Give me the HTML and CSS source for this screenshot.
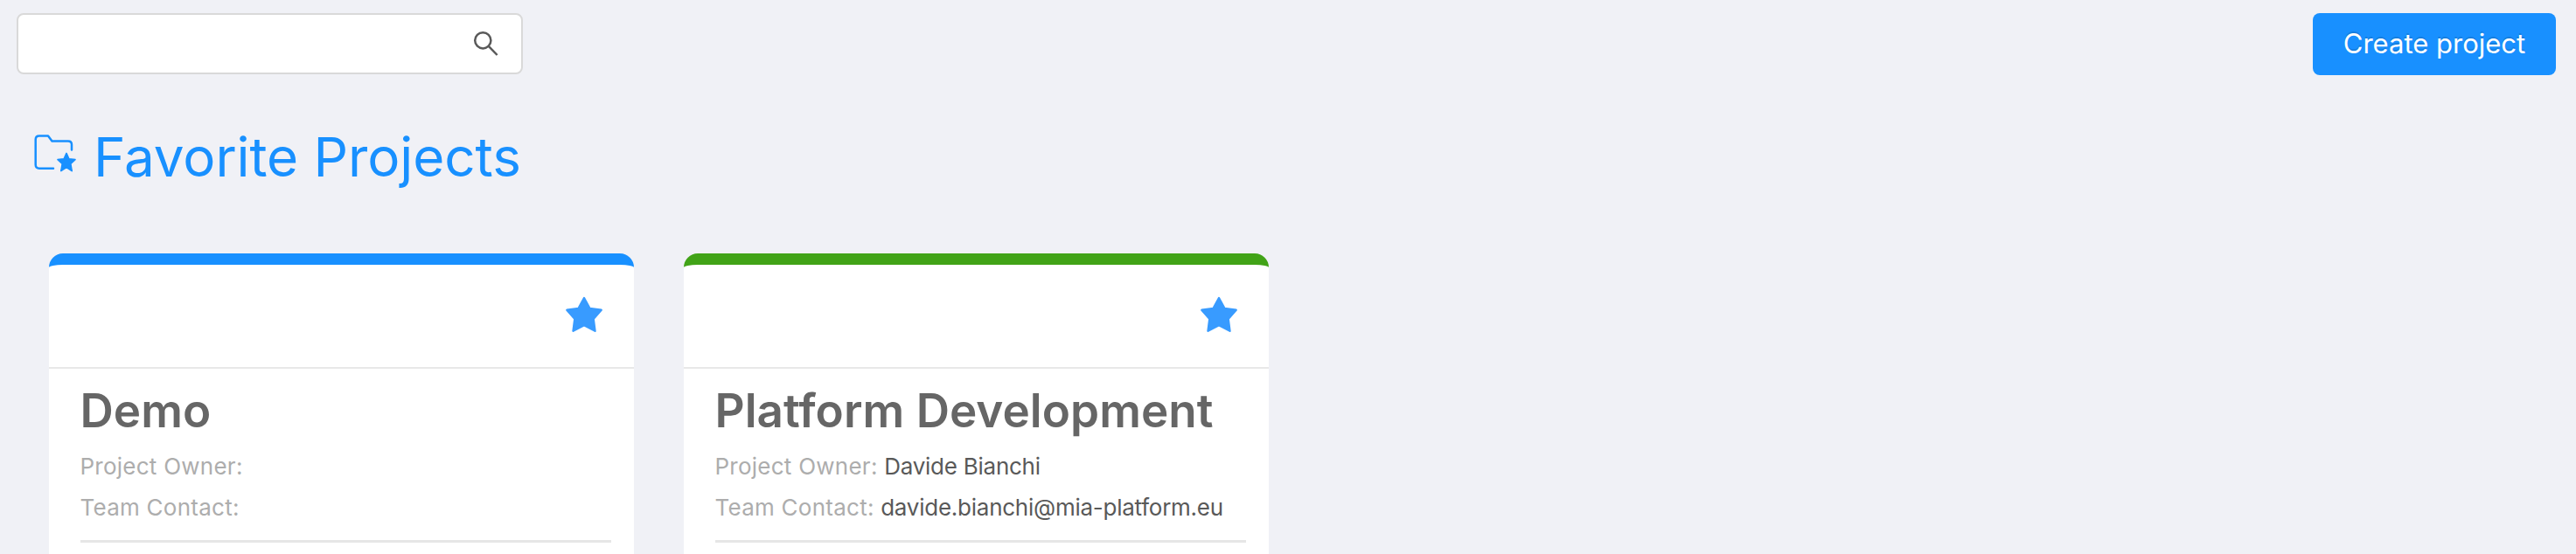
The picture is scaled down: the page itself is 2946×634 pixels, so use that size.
FILE: index.html
```html
<!DOCTYPE html>
<html lang="en">
<head>
<meta charset="utf-8">
<title>Projects</title>
<link rel="stylesheet" href="styles.css">
</head>
<body>
<header class="toolbar">
  <div class="search">
    <input class="search-input" type="text" aria-label="Search">
    <svg class="search-icon" viewBox="0 0 30 30"><circle cx="12.3" cy="11.3" r="9.1"/><path d="M18.8 17.8 28.6 28"/></svg>
  </div>
  <button class="create">Create project</button>
</header>
<main>
  <h1 class="heading">
    <svg class="folder" viewBox="0 0 50 46"><path class="folder-line" d="M22 38.7H5.9Q1.7 38.7 1.7 34.5V5.6Q1.7 1.4 5.9 1.4H16L20.5 7.4H38.9Q43 7.4 43 11.5V17.4"/><path class="folder-star" d="M37 21.4 39.9 27.8 47 28.6 41.8 33.5 43.2 41.6 37 37.6 30.8 41.6 32.2 33.5 27 28.6 34.1 27.8Z"/></svg>
    <span>Favorite Projects</span>
  </h1>
  <section class="cards">
    <article class="card">
      <div class="card-top"><svg class="star" viewBox="0 0 44 42"><path d="M22 2 28.4 13.9 41.7 15.8 32.7 26 34.5 39.8 22 33.2 9.5 39.8 11.3 26 2.3 15.8 15.6 13.9Z"/></svg></div>
      <div class="card-body">
        <h2 class="name">Demo</h2>
        <p class="info">Project Owner:</p>
        <p class="info">Team Contact:</p>
        <hr class="rule">
      </div>
    </article>
    <article class="card green">
      <div class="card-top"><svg class="star" viewBox="0 0 44 42"><path d="M22 2 28.4 13.9 41.7 15.8 32.7 26 34.5 39.8 22 33.2 9.5 39.8 11.3 26 2.3 15.8 15.6 13.9Z"/></svg></div>
      <div class="card-body">
        <h2 class="name">Platform Development</h2>
        <p class="info">Project Owner: <span class="value">Davide Bianchi</span></p>
        <p class="info">Team Contact: <span class="value">davide.bianchi@mia-platform.eu</span></p>
        <hr class="rule">
      </div>
    </article>
  </section>
</main>
</body>
</html>
```
FILE: styles.css
```css
* { box-sizing: border-box; }
html { height: 100%; }
body { margin: 0; height: 100%; overflow: hidden; background: #f0f1f6; font-family: Inter, "Liberation Sans", sans-serif; font-variant-ligatures: none; }
.toolbar { display: flex; justify-content: space-between; padding: 15px 23px 0 19px; height: 86px; }
.search { display: flex; align-items: center; width: 579px; height: 70px; padding: 0 26px 0 22px; background: #fff; border: 2px solid #d9d9d9; border-radius: 8px; }
.search-input { flex: 1; min-width: 0; border: 0; outline: 0; background: none; font: 28px Inter, sans-serif; }
.search-icon { width: 30px; height: 30px; fill: none; stroke: #595959; stroke-width: 2.5; }
.create { width: 278px; height: 71px; padding: 0 0 2px; border: 0; border-radius: 8px; background: #1890ff; color: #fff; font: 400 31px/69px Inter, sans-serif; letter-spacing: 0; text-shadow: 0 -2px 0 rgba(0, 0, 0, .12); }
.heading { display: flex; align-items: flex-start; margin: 0; padding: 54px 0 0 39px; height: 204px; color: #1890ff; font-size: 62px; font-weight: 400; line-height: 80px; letter-spacing: -.1px; }
.folder { width: 50px; height: 46px; margin: 14px 18px 0 0; }
.folder-line { fill: none; stroke: #1890ff; stroke-width: 2.5; stroke-linecap: round; stroke-linejoin: round; }
.folder-star { fill: #1890ff; stroke: #1890ff; stroke-width: 1.6; stroke-linejoin: round; }
.cards { display: flex; gap: 57px; padding-left: 56px; }
.card { width: 669px; height: 344px; background: #fff; border-top: 13px solid #1890ff; border-radius: 16px 16px 0 0; }
.green { border-top-color: #41a317; }
.card-top { display: flex; justify-content: flex-end; height: 119px; padding: 36px 35px 0 0; border-bottom: 2px solid #e8e8e8; }
.star { width: 44px; height: 42px; fill: #389bff; stroke: #389bff; stroke-width: 2.4; stroke-linejoin: round; }
.card-body { padding: 15px 26px 0 36px; }
.name { margin: 0 0 7px -.5px; color: #666; font-size: 53px; font-weight: 600; line-height: 66px; letter-spacing: .03px; white-space: nowrap; }
.info { margin: 0 0 0 -.5px; color: #adadad; font-size: 26px; font-weight: 400; line-height: 47px; letter-spacing: .25px; white-space: nowrap; }
.value { color: #595959; letter-spacing: -.25px; }
.rule { height: 3px; margin: 14px 0 0; border: 0; background: #e6e6e6; }
```
